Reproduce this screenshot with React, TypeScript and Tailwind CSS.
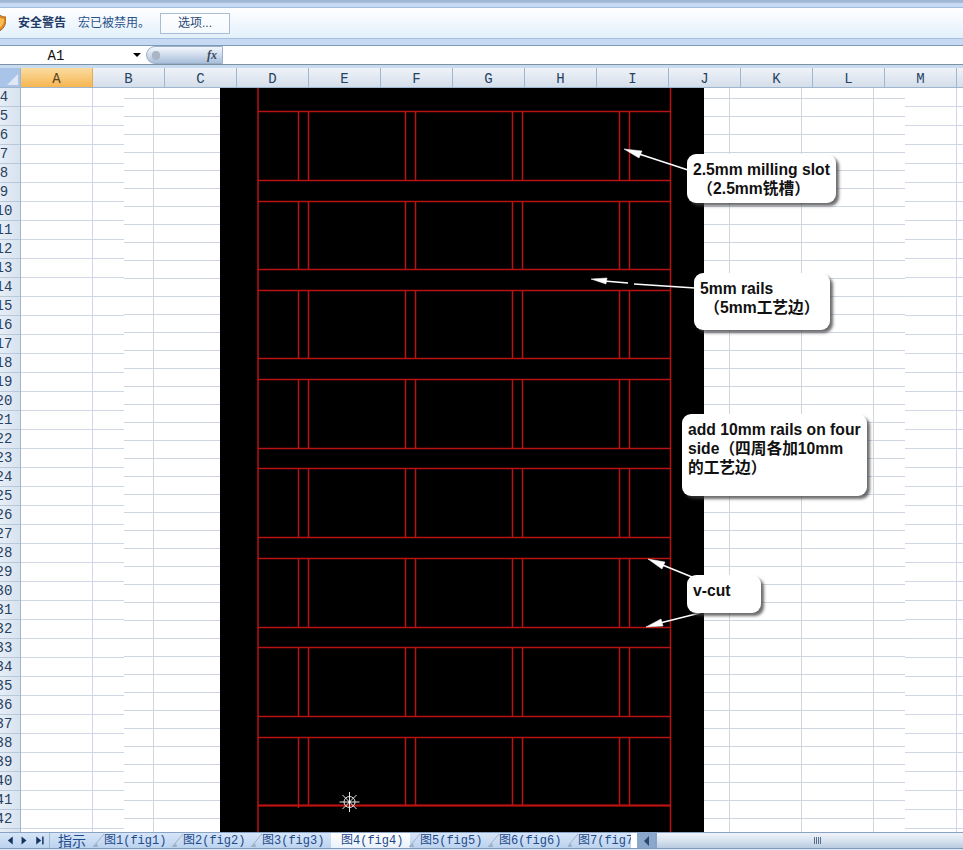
const SANS = "font-['Liberation_Sans','Noto_Sans_CJK_SC',sans-serif]";
const cols = ['A','B','C','D','E','F','G','H','I','J','K','L','M'];
const rows = Array.from({ length: 39 }, (_, i) => i + 4);
const hLines = [111,180,201,269,290,358,379,448,468,537,558,627,647,716,737,805];
const panels: [number, number][] = [[111,180],[201,269],[290,358],[379,448],[468,537],[558,627],[647,716],[737,805]];
const vLines = [298,308,405,415,512,522,619,629];
const tabs = [1,2,3,4,5,6,7];

function Shield() {
  return (
    <svg width="6" height="16" viewBox="0 0 6 16" className="shrink-0">
      <path d="M-8 2 C-4 2 -1 1 0 0 C1 1 3 2 6 2 C6.5 9 4 13 0 16 C-4 13 -8 9 -8 2Z" fill="#e8821c" stroke="#8a5a2a" strokeWidth="0.8" />
      <path d="M0 3 L4 4 C4 8 3 10 0 13Z" fill="#f8c050" />
    </svg>
  );
}

function Drawing() {
  return (
    <svg width="484" height="744" viewBox="220 88 484 744" className="block">
      <g stroke="#b81212" strokeWidth="1.5">
        <line x1="258" y1="88" x2="258" y2="832" />
        <line x1="670.5" y1="88" x2="670.5" y2="832" />
        {hLines.map((y) => (
          <line key={y} x1="258" y1={y + 0.5} x2="670" y2={y + 0.5} />
        ))}
        {panels.map(([a, b]) =>
          vLines.map((x) => <line key={`${a}-${x}`} x1={x + 0.5} y1={a} x2={x + 0.5} y2={b + 1} />)
        )}
        <line x1="298.5" y1="805" x2="298.5" y2="808" />
      </g>
      <line x1="258" y1="805.5" x2="670" y2="805.5" stroke="#b81212" strokeWidth="2" />
      <g stroke="#e6e6e6" strokeWidth="1">
        <circle cx="349.5" cy="802" r="5.5" fill="none" />
        <line x1="339.5" y1="802" x2="359.5" y2="802" />
        <line x1="349.5" y1="792" x2="349.5" y2="812" />
        <line x1="342.5" y1="795" x2="356.5" y2="809" />
        <line x1="356.5" y1="795" x2="342.5" y2="809" />
      </g>
      <rect x="348.5" y="801" width="2" height="2" fill="#fff" />
    </svg>
  );
}

function Arrows() {
  return (
    <svg width="942" height="744" viewBox="21 88 942 744" className="absolute left-0 top-0">
      <g stroke="#fff" strokeWidth="1.6" fill="#fff">
        <line x1="688" y1="170" x2="636" y2="153" />
        <polygon points="624,149 642,151 639,158" strokeWidth="0.5" />
        <line x1="695" y1="288" x2="634" y2="284" />
        <line x1="628" y1="283" x2="604" y2="281" />
        <polygon points="591,279 607,278 606,284" strokeWidth="0.5" />
        <line x1="692" y1="577" x2="660" y2="564" />
        <polygon points="648,559 665,562 662,569" strokeWidth="0.5" />
        <line x1="700" y1="613" x2="660" y2="623" />
        <polygon points="646,627 661,619 663,626" strokeWidth="0.5" />
      </g>
    </svg>
  );
}

function Callout({ className, children }: { className: string; children: React.ReactNode }) {
  return (
    <div className={`absolute rounded-[9px] bg-white text-[15.7px] leading-[19px] font-bold text-[#111] shadow-[3px_3px_3px_rgba(60,60,60,0.75)] whitespace-pre ${SANS} ${className}`}>
      {children}
    </div>
  );
}

export default function App() {
  return (
    <div className={`w-[963px] h-[850px] overflow-hidden flex flex-col bg-white ${SANS}`}>
      {/* window top edge */}
      <div className="h-[8px] shrink-0 bg-[linear-gradient(to_bottom,#9fb4d0_0px,#a9bedb_3px,#c6daf5_3px,#c6daf5_7px,#a5bddc_7px)]" />

      {/* security message bar */}
      <div className="h-[31px] shrink-0 flex items-center bg-gradient-to-b from-white to-[#e2f0fb] border-b border-[#a5bfdd]">
        <Shield />
        <span className="ml-3 text-[12px] font-bold text-[#1f3d68]">安全警告</span>
        <span className="ml-3 text-[12px] text-[#2a5288]">宏已被禁用。</span>
        <button className="ml-[10px] w-[70px] h-[21px] flex items-center justify-center border border-[#a9bcd2] bg-white/60 text-[12px] text-[#2a4a78]">选项...</button>
      </div>
      <div className="h-[7px] shrink-0 bg-[#c6daf3] border-b border-[#7f9ab8]" />

      {/* formula bar */}
      <div className="h-[19px] shrink-0 flex bg-white border-b border-[#7b91a6]">
        <div className="w-[146px] shrink-0 flex items-center">
          <span className="w-[112px] pt-[2px] text-center font-['Liberation_Mono',monospace] text-[14px] text-[#111]">A1</span>
          <span className="ml-[21px] w-0 h-0 border-x-[4px] border-x-transparent border-t-[4px] border-t-black" />
        </div>
        <div className="w-[77px] shrink-0 h-[18px] relative flex items-center justify-end pr-[5px] rounded-l-full border border-[#9cb0c8] bg-gradient-to-b from-[#f4f7fb] via-[#cfdcec] to-[#a9bfdb]">
          <span className="absolute left-[5px] top-[4px] w-[8px] h-[9px] rounded-full bg-[#a9b5c4]" />
          <span className="font-['Liberation_Serif',serif] italic font-bold text-[12px] text-[#3d4a5c]">fx</span>
        </div>
      </div>
      <div className="h-[3px] shrink-0 bg-[#c9dbef]" />

      {/* column headers */}
      <div className="h-[20px] shrink-0 flex border-b border-[#9eb6ce] font-['Liberation_Mono',monospace] text-[14px] text-[#27415f]">
        <div className="w-[21px] shrink-0 flex items-end justify-end p-[2px] bg-[#a9c4e8] border-r border-[#9eb6ce]">
          <svg width="11" height="11" viewBox="0 0 11 11"><polygon points="11,0 11,11 0,11" fill="#dfe9f5" /></svg>
        </div>
        {cols.map((c) => (
          <div
            key={c}
            className={`w-[72px] shrink-0 pt-[3px] flex items-center justify-center border-r ${
              c === 'A'
                ? 'bg-gradient-to-b from-[#fbdc9f] to-[#f6b64f] border-[#e3ab55] text-[#5a4220]'
                : 'bg-gradient-to-b from-[#eff3f8] to-[#d4deea] border-[#9eb6ce]'
            }`}
          >
            {c}
          </div>
        ))}
        <div className="flex-1 bg-gradient-to-b from-[#eff3f8] to-[#d4deea]" />
      </div>

      {/* sheet */}
      <div className="flex-1 min-h-0 flex">
        <div className="w-[21px] shrink-0 overflow-hidden bg-gradient-to-r from-[#e6edf6] to-[#d8e3f0] border-r border-[#9eb6ce] font-['Liberation_Mono',monospace] text-[14px] text-[#27415f]">
          {rows.map((r) => (
            <div key={r} className="h-[19px] border-b border-[#b8c9da] flex items-center">
              <span className="w-[8px] flex justify-center whitespace-nowrap">{r}</span>
            </div>
          ))}
        </div>

        <div className="flex-1 relative overflow-hidden bg-white bg-[linear-gradient(to_right,#d0d7e5_1px,transparent_1px),linear-gradient(to_bottom,#d0d7e5_1px,transparent_1px)] bg-size-[72px_19px] bg-position-[71px_18px]">
          {/* pasted picture */}
          <div className="absolute left-[103px] top-0 w-[781px] h-full bg-white bg-[linear-gradient(to_right,#ced4e0_1px,transparent_1px),linear-gradient(to_bottom,#ced4e0_1px,transparent_1px)] bg-size-[72px_18px] bg-position-[29px_10px]">
            <div className="absolute left-[96px] top-0 w-[484px] h-full bg-black">
              <Drawing />
            </div>
          </div>
          <Arrows />
          <Callout className="left-[666px] top-[66px] w-[149px] h-[49px] pl-[6px] pt-[6px]">{'2.5mm milling slot\n （2.5mm铣槽）'}</Callout>
          <Callout className="left-[673px] top-[185px] w-[136px] h-[57px] pl-[6px] pt-[6px]">{'5mm rails\n （5mm工艺边）'}</Callout>
          <Callout className="left-[661px] top-[326px] w-[185px] h-[82px] pl-[6px] pt-[6px]">{'add 10mm rails on four\nside（四周各加10mm\n的工艺边）'}</Callout>
          <Callout className="left-[666px] top-[487px] w-[74px] h-[38px] pl-[6px] pt-[6px]">{'v-cut'}</Callout>
        </div>
      </div>

      {/* sheet tabs + scrollbar */}
      <div className="h-[16px] shrink-0 flex border-t border-[#8aa3c4] bg-gradient-to-b from-[#d6e5f8] to-[#bcd3ee] font-['Liberation_Mono','Noto_Sans_CJK_SC',monospace] text-[12px] text-[#1f4a8c]">
        <div className="w-[50px] shrink-0 relative flex items-center border-r border-[#9fb4cf]">
          <svg width="50" height="15" viewBox="0 0 50 15" fill="#15345f">
            <polygon points="8,7.5 13,3.5 13,11.5" />
            <polygon points="27,7.5 22,3.5 22,11.5" />
            <polygon points="42,7.5 37,3.5 37,11.5" />
            <rect x="43" y="3.5" width="1.5" height="8" />
          </svg>
        </div>
        <div className="w-[44px] shrink-0 pl-[8px] flex items-center text-[14px] font-['Noto_Sans_CJK_SC',sans-serif]">指示</div>
        {tabs.map((t) => (
          <div
            key={t}
            className={`shrink-0 relative flex items-center pl-[10px] whitespace-nowrap ${
              t === 4 ? 'bg-gradient-to-b from-white to-[#e9f1fb]' : ''
            } ${t === 7 ? 'w-[63px] overflow-hidden' : 'w-[79px]'}`}
          >
            {t !== 4 && (
              <svg width="12" height="15" viewBox="0 0 12 15" className="absolute left-[-1px] top-0">
                <line x1="0" y1="14" x2="11" y2="1" stroke="#9db2cd" strokeWidth="1" />
                <polygon points="0,14 4,10 5,14" fill="#9fb0c4" />
              </svg>
            )}
            <span>{`图${t}(fig${t})`}</span>
          </div>
        ))}
        <div className="w-[6px] shrink-0 bg-white" />
        <div className="w-[18px] shrink-0 flex items-center justify-center bg-[#8ca7cc]">
          <span className="w-0 h-0 border-y-[5px] border-y-transparent border-r-[5px] border-r-[#2c4770]" />
        </div>
        <div className="flex-1 flex items-center justify-center pl-[15px] border-l-2 border-[#8aa3c4] bg-gradient-to-b from-[#eef3f9] via-[#d8e3f0] to-[#b9cbe0]">
          <span className="flex gap-[1px]">
            <i className="block w-[1px] h-[7px] bg-[#5a6f8c]" />
            <i className="block w-[1px] h-[7px] bg-[#5a6f8c]" />
            <i className="block w-[1px] h-[7px] bg-[#5a6f8c]" />
            <i className="block w-[1px] h-[7px] bg-[#5a6f8c]" />
          </span>
        </div>
      </div>
      <div className="h-[2px] shrink-0 bg-[#dbe8f8] border-t border-[#7f9ab8]" />
    </div>
  );
}
